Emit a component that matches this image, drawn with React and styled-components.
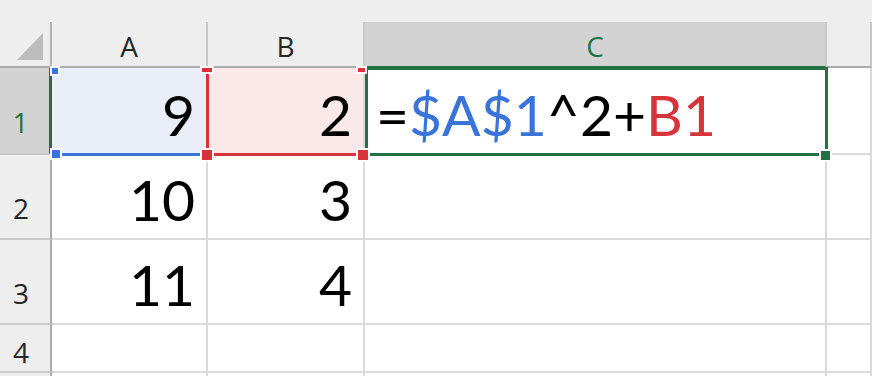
import React from "react";
import styled, { createGlobalStyle } from "styled-components";

const GlobalStyle = createGlobalStyle`
  html, body {
    margin: 0;
    padding: 0;
    background: #fff;
  }
  body {
    width: 872px;
    height: 376px;
    overflow: hidden;
  }
`;

const GREEN = "#217346";
const BLUE = "#3a74d8";
const RED = "#d5343b";

const columns = [
  { key: "A", label: "A" },
  { key: "B", label: "B" },
  { key: "C", label: "C" },
  { key: "D", label: "" },
];
const activeCol = "C";

// row 5 only peeks in at the bottom edge, so it carries no label
const rows = [
  { n: 1, label: "1", h: 87, cells: ["9", "2", "", ""] },
  { n: 2, label: "2", h: 85, cells: ["10", "3", "", ""] },
  { n: 3, label: "3", h: 85, cells: ["11", "4", "", ""] },
  { n: 4, label: "4", h: 48, cells: ["", "", "", ""] },
  { n: 5, label: "", h: 30, cells: ["", "", "", ""] },
];

const RefCorner = ({ color, w, h, at }) => (
  <Handle $color={color} style={{ width: w, height: h, ...at }} />
);

const App = () => {
  return (
    <>
      <GlobalStyle />
      <Sheet $rows={rows.map((r) => r.h + "px").join(" ")}>
        <TopStrip />
        <Corner>
          <svg width="52" height="46" viewBox="0 0 52 46">
            <polygon points="17,38 43,11 43,38" fill="#bdbdbd" />
          </svg>
        </Corner>
        {columns.map((c) => (
          <ColHeader key={c.key} $active={c.key === activeCol}>
            {c.label}
          </ColHeader>
        ))}

        {rows.map((row) => (
          <React.Fragment key={row.n}>
            <RowHeader $active={row.n === 1} $pad={row.h > 60 ? 22 : 8}>
              {row.label}
            </RowHeader>
            {row.n === 1 ? (
              <>
                <Cell $fill="#e9eef9">
                  9
                  <RefFrame $color={BLUE} $left={false} />
                  <RefCorner color={BLUE} w={6} h={6} at={{ left: 0, top: 0 }} />
                  <RefCorner color={BLUE} w={8} h={8} at={{ left: 0, top: 82 }} />
                </Cell>
                <Cell $fill="#fbe9e9">
                  2
                  <RefFrame $color={RED} $left />
                  <RefCorner color={RED} w={10} h={4} at={{ left: -6, top: 0 }} />
                  <RefCorner color={RED} w={7} h={4} at={{ right: -2, top: 0 }} />
                  <RefCorner color={RED} w={10} h={10} at={{ left: -6, top: 82 }} />
                  <RefCorner color={RED} w={10} h={10} at={{ right: -5, top: 82 }} />
                </Cell>
                <Cell $align="flex-start">
                  <Formula>
                    <Token>=</Token>
                    <Token $color={BLUE}>$A$1</Token>
                    <Token>^2+</Token>
                    <Token $color={RED}>B1</Token>
                  </Formula>
                  <ActiveFrame />
                  <RefCorner color={GREEN} w={9} h={9} at={{ right: -5, top: 83 }} />
                </Cell>
                <Cell />
              </>
            ) : (
              row.cells.map((v, i) => <Cell key={i}>{v}</Cell>)
            )}
          </React.Fragment>
        ))}
      </Sheet>
    </>
  );
};

export default App;

const Sheet = styled.div`
  display: grid;
  grid-template-columns: 52px 156px 157px 462px 1fr;
  grid-template-rows: 22px 46px ${(p) => p.$rows};
  width: 872px;
  height: 376px;
  overflow: hidden;
  background: #fff;
  font-family: "Open Sans", "Noto Sans", sans-serif;
`;

const TopStrip = styled.div`
  grid-column: 1 / -1;
  background: #eeeeee;
`;

const Corner = styled.div`
  background: #eeeeee;
  border-right: 2px solid #b4b4b4;
  border-bottom: 2px solid #ababab;
  svg {
    display: block;
  }
`;

const ColHeader = styled.div`
  display: flex;
  align-items: center;
  justify-content: center;
  padding-top: 4px;
  box-sizing: border-box;
  background: ${(p) => (p.$active ? "#d3d3d3" : "#eeeeee")};
  border-right: 2px solid #c8c8c8;
  border-bottom: 2px solid ${(p) => (p.$active ? GREEN : "#ababab")};
  color: ${(p) => (p.$active ? GREEN : "#262626")};
  font-size: 28px;
  line-height: 1;
`;

const RowHeader = styled.div`
  display: flex;
  align-items: center;
  justify-content: center;
  box-sizing: border-box;
  padding-top: ${(p) => p.$pad}px;
  padding-right: 8px;
  background: ${(p) => (p.$active ? "#d3d3d3" : "#eeeeee")};
  border-right: ${(p) => (p.$active ? `3px solid ${GREEN}` : "2px solid #ababab")};
  border-bottom: 2px solid #c8c8c8;
  color: ${(p) => (p.$active ? GREEN : "#262626")};
  font-size: 28px;
  line-height: 1;
`;

const Cell = styled.div`
  position: relative;
  display: flex;
  align-items: flex-end;
  justify-content: ${(p) => p.$align || "flex-end"};
  box-sizing: border-box;
  padding: 0 11px 10px;
  background: ${(p) => p.$fill || "#fff"};
  border-right: 2px solid #dadada;
  border-bottom: 2px solid #dadada;
  font-family: Lato, "Open Sans", sans-serif;
  font-size: 57px;
  line-height: 1;
  color: #000;
`;

const Formula = styled.span`
  white-space: nowrap;
`;

const Token = styled.span`
  color: ${(p) => p.$color || "#000"};
`;

const RefFrame = styled.span`
  position: absolute;
  z-index: 2;
  top: 6px;
  left: ${(p) => (p.$left ? "-2px" : "6px")};
  right: 0;
  bottom: -3px;
  border-left: ${(p) => (p.$left ? `3px solid ${p.$color}` : "none")};
  border-bottom: 3px solid ${(p) => p.$color};
  pointer-events: none;
`;

const Handle = styled.span`
  position: absolute;
  z-index: 4;
  background: ${(p) => p.$color};
  box-shadow: 0 0 0 2px #fff;
`;

const ActiveFrame = styled.span`
  position: absolute;
  z-index: 3;
  top: -1px;
  left: 0;
  right: -3px;
  bottom: -3px;
  border: 3px solid ${GREEN};
  pointer-events: none;
`;
